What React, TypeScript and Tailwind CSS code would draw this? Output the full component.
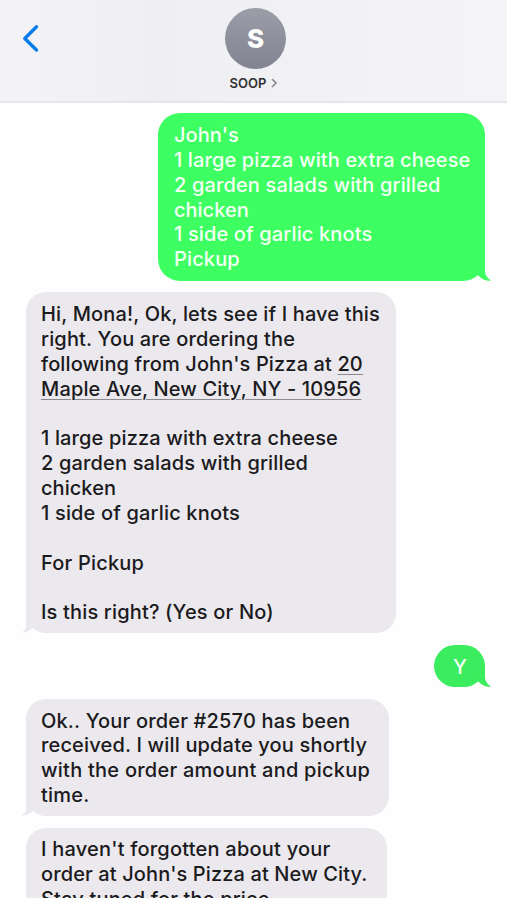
import { ReactNode } from "react";

type Side = "in" | "out";

function Tail({ side, fill }: { side: Side; fill: string }) {
  return side === "out" ? (
    <svg className="absolute -right-[6px] bottom-0 h-[22px] w-[22px]" viewBox="0 0 22 22" fill={fill}>
      <path d="M16 0V13C16.400 16.500 18.500 19.500 22 21.600C17.500 22.200 13 20.200 10 17.200L2 10V0Z" />
    </svg>
  ) : (
    <svg className="absolute -left-[5px] bottom-0 h-[22px] w-[22px]" viewBox="0 0 22 22" fill={fill}>
      <path d="M5 0V15C5 18 3 20.500 0 21.500C4 22 8 20.500 11 17.500L20 10V0Z" />
    </svg>
  );
}

function Bubble({ side, fill, tail, box, children }: { side: Side; fill: string; tail?: boolean; box: string; children: ReactNode }) {
  return (
    <div className={`relative shrink-0 ${box}`} style={{ backgroundColor: fill }}>
      {tail && <Tail side={side} fill={fill} />}
      <div className="relative">{children}</div>
    </div>
  );
}

function Line({ children, track = "tracking-[0.14px]" }: { children?: ReactNode; track?: string }) {
  return <div className={`h-[24.87px] whitespace-pre ${track}`}>{children}</div>;
}

const GREEN = "#3eff61";
const GREY = "#ebe9ed";

export default function App() {
  return (
    <div className="flex h-[900px] w-[507px] flex-col overflow-hidden bg-[#fefefe] font-['Inter','Liberation_Sans',sans-serif] text-[20px] leading-[24.87px] font-medium text-[#1b1a1d]">
      <header className="grid h-[103px] shrink-0 grid-cols-[1fr_80px_1fr] border-b-2 border-[#e7e7e9] bg-linear-to-r from-[#f4f3f6] via-[#efeef1] via-30% to-[#f5f4f7]">
        <svg className="mt-[24px] ml-[21px] h-[29px] w-[20px]" viewBox="0 0 20 29" fill="none" stroke="#087dea" strokeWidth="3.400" strokeLinecap="round" strokeLinejoin="round">
          <path d="M15.500 2.800L3.800 14.500L15.500 26" />
        </svg>
        <div className="flex flex-col items-center pt-[8px]">
          <div className="ml-[4px] flex h-[61px] w-[61px] items-center justify-center rounded-full bg-linear-to-b from-[#9b9da9] to-[#818391] pt-px text-[26px] font-extrabold text-white">S</div>
          <div className="mt-[5px] flex items-center gap-[5px] text-[13px] leading-[18px] font-semibold text-[#303033]">
            <span>SOOP</span>
            <svg className="h-[10px] w-[6px]" viewBox="0 0 6 10" fill="none" stroke="#8b8b90" strokeWidth="1.600"><path d="M1 1L5 5L1 9" /></svg>
          </div>
        </div>
      </header>

      <main className="flex h-[795px] shrink-0 flex-col overflow-hidden">
        <Bubble side="out" fill={GREEN} tail box="mt-[10px] ml-[158px] h-[168px] w-[327px] rounded-[22px] pt-[10px] pl-[16px] text-[#f4fff5]">
          <Line track="tracking-[0.08px]">John's</Line>
          <Line track="tracking-[0.12px]">1 large pizza with extra cheese</Line>
          <Line>2 garden salads with grilled</Line>
          <Line track="tracking-normal">chicken</Line>
          <Line>1 side of garlic knots</Line>
          <Line>Pickup</Line>
        </Bubble>
        <Bubble side="in" fill={GREY} tail box="mt-[11px] ml-[26px] h-[341px] w-[370px] rounded-[20px] pt-[10px] pl-[15px]">
          <Line>Hi, Mona!, Ok, lets see if I have this</Line>
          <Line track="tracking-[0.16px]">right. You are ordering the</Line>
          <Line track="tracking-[0.12px]">following from John's Pizza at <span className="underline decoration-[#8b898e] decoration-1 underline-offset-[3px]">20</span></Line>
          <Line><span className="underline decoration-[#8b898e] decoration-1 underline-offset-[3px]">Maple Ave, New City, NY - 10956</span></Line>
          <Line />
          <Line>1 large pizza with extra cheese</Line>
          <Line track="tracking-[0.16px]">2 garden salads with grilled</Line>
          <Line track="tracking-[0.05px]">chicken</Line>
          <Line track="tracking-[0.16px]">1 side of garlic knots</Line>
          <Line />
          <Line track="tracking-[0.19px]">For Pickup</Line>
          <Line />
          <Line track="tracking-[0.16px]">Is this right? (Yes or No)</Line>
        </Bubble>
        <Bubble side="out" fill="#3bed5e" tail box="mt-[12px] ml-[434px] h-[42px] w-[51px] rounded-[21px] pt-[10px] pl-[19px] text-[#f4fff5]">
          <Line>Y</Line>
        </Bubble>
        <Bubble side="in" fill={GREY} tail box="mt-[12px] ml-[26px] h-[117px] w-[363px] rounded-[20px] pt-[9.600px] pl-[15px]">
          <Line track="tracking-[0.18px]">Ok.. Your order #2570 has been</Line>
          <Line track="tracking-[0.16px]">received. I will update you shortly</Line>
          <Line track="tracking-[0.24px]">with the order amount and pickup</Line>
          <Line track="tracking-[0.25px]">time.</Line>
        </Bubble>
        <Bubble side="in" fill={GREY} box="mt-[12px] ml-[26px] h-[117px] w-[361px] rounded-[20px] pt-[9px] pl-[15px]">
          <Line track="tracking-[0.22px]">I haven't forgotten about your</Line>
          <Line track="tracking-[0.12px]">order at John's Pizza at New City.</Line>
          <Line track="tracking-[0.16px]">Stay tuned for the price.</Line>
        </Bubble>
      </main>
    </div>
  );
}
